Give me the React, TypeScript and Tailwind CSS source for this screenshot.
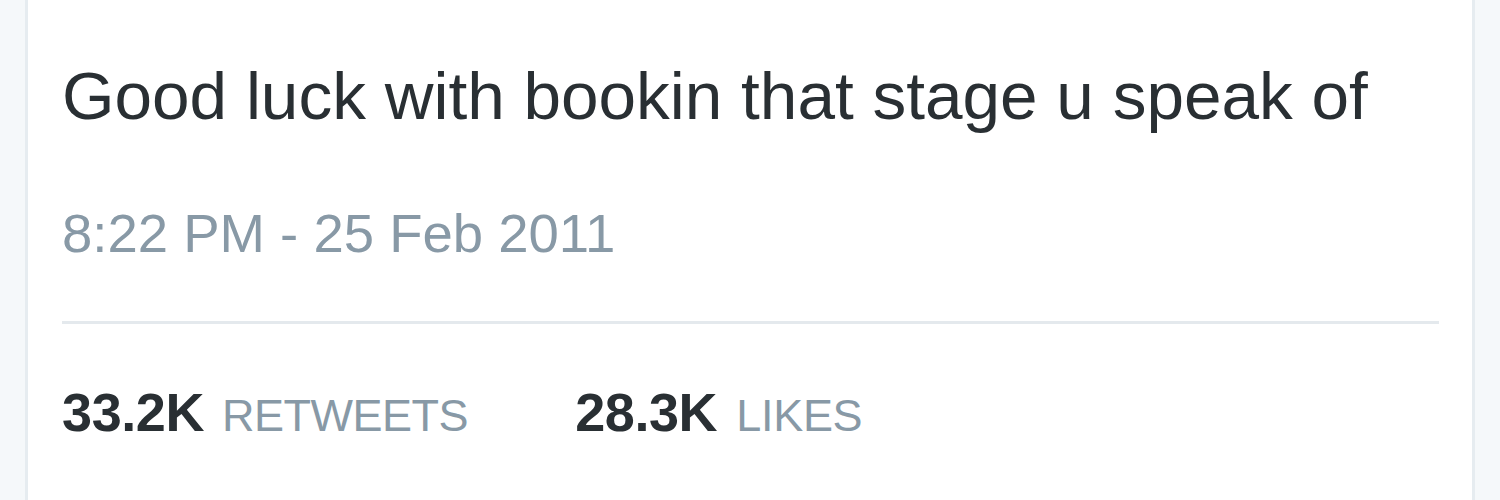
export default function App() {
  return (
    <div className="h-[500px] w-[1500px] overflow-hidden bg-[#f5f8fa] px-[25px]" style={{ fontFamily: '"Liberation Sans", Arial, sans-serif' }}>
      <div className="h-full border-x-[3px] border-[#e6ecf0] bg-white pl-[34px] pr-[33px]">
        <div className="pt-[58px] text-[67.5px] leading-[76px] text-[#292f33]">Good luck with bookin that stage u speak of</div>
        <div className="mt-[70px] text-[54.5px] leading-[60px] text-[#8899a6]">8:22 PM - 25 Feb 2011</div>
        <div className="mt-[57px] h-[3px] bg-[#e4e9ed]" />
        <div className="mt-[58px] flex items-baseline leading-[60px]">
          <div className="flex items-baseline">
            <span className="text-[54px] font-bold tracking-[-0.4px] text-[#292f33]">33.2K</span>
            <span className="ml-[18px] text-[45px] tracking-[-0.5px] text-[#8899a6]">RETWEETS</span>
          </div>
          <div className="ml-[107px] flex items-baseline">
            <span className="text-[54px] font-bold tracking-[-0.4px] text-[#292f33]">28.3K</span>
            <span className="ml-[19px] text-[45px] tracking-[-0.3px] text-[#8899a6]">LIKES</span>
          </div>
        </div>
      </div>
    </div>
  );
}
